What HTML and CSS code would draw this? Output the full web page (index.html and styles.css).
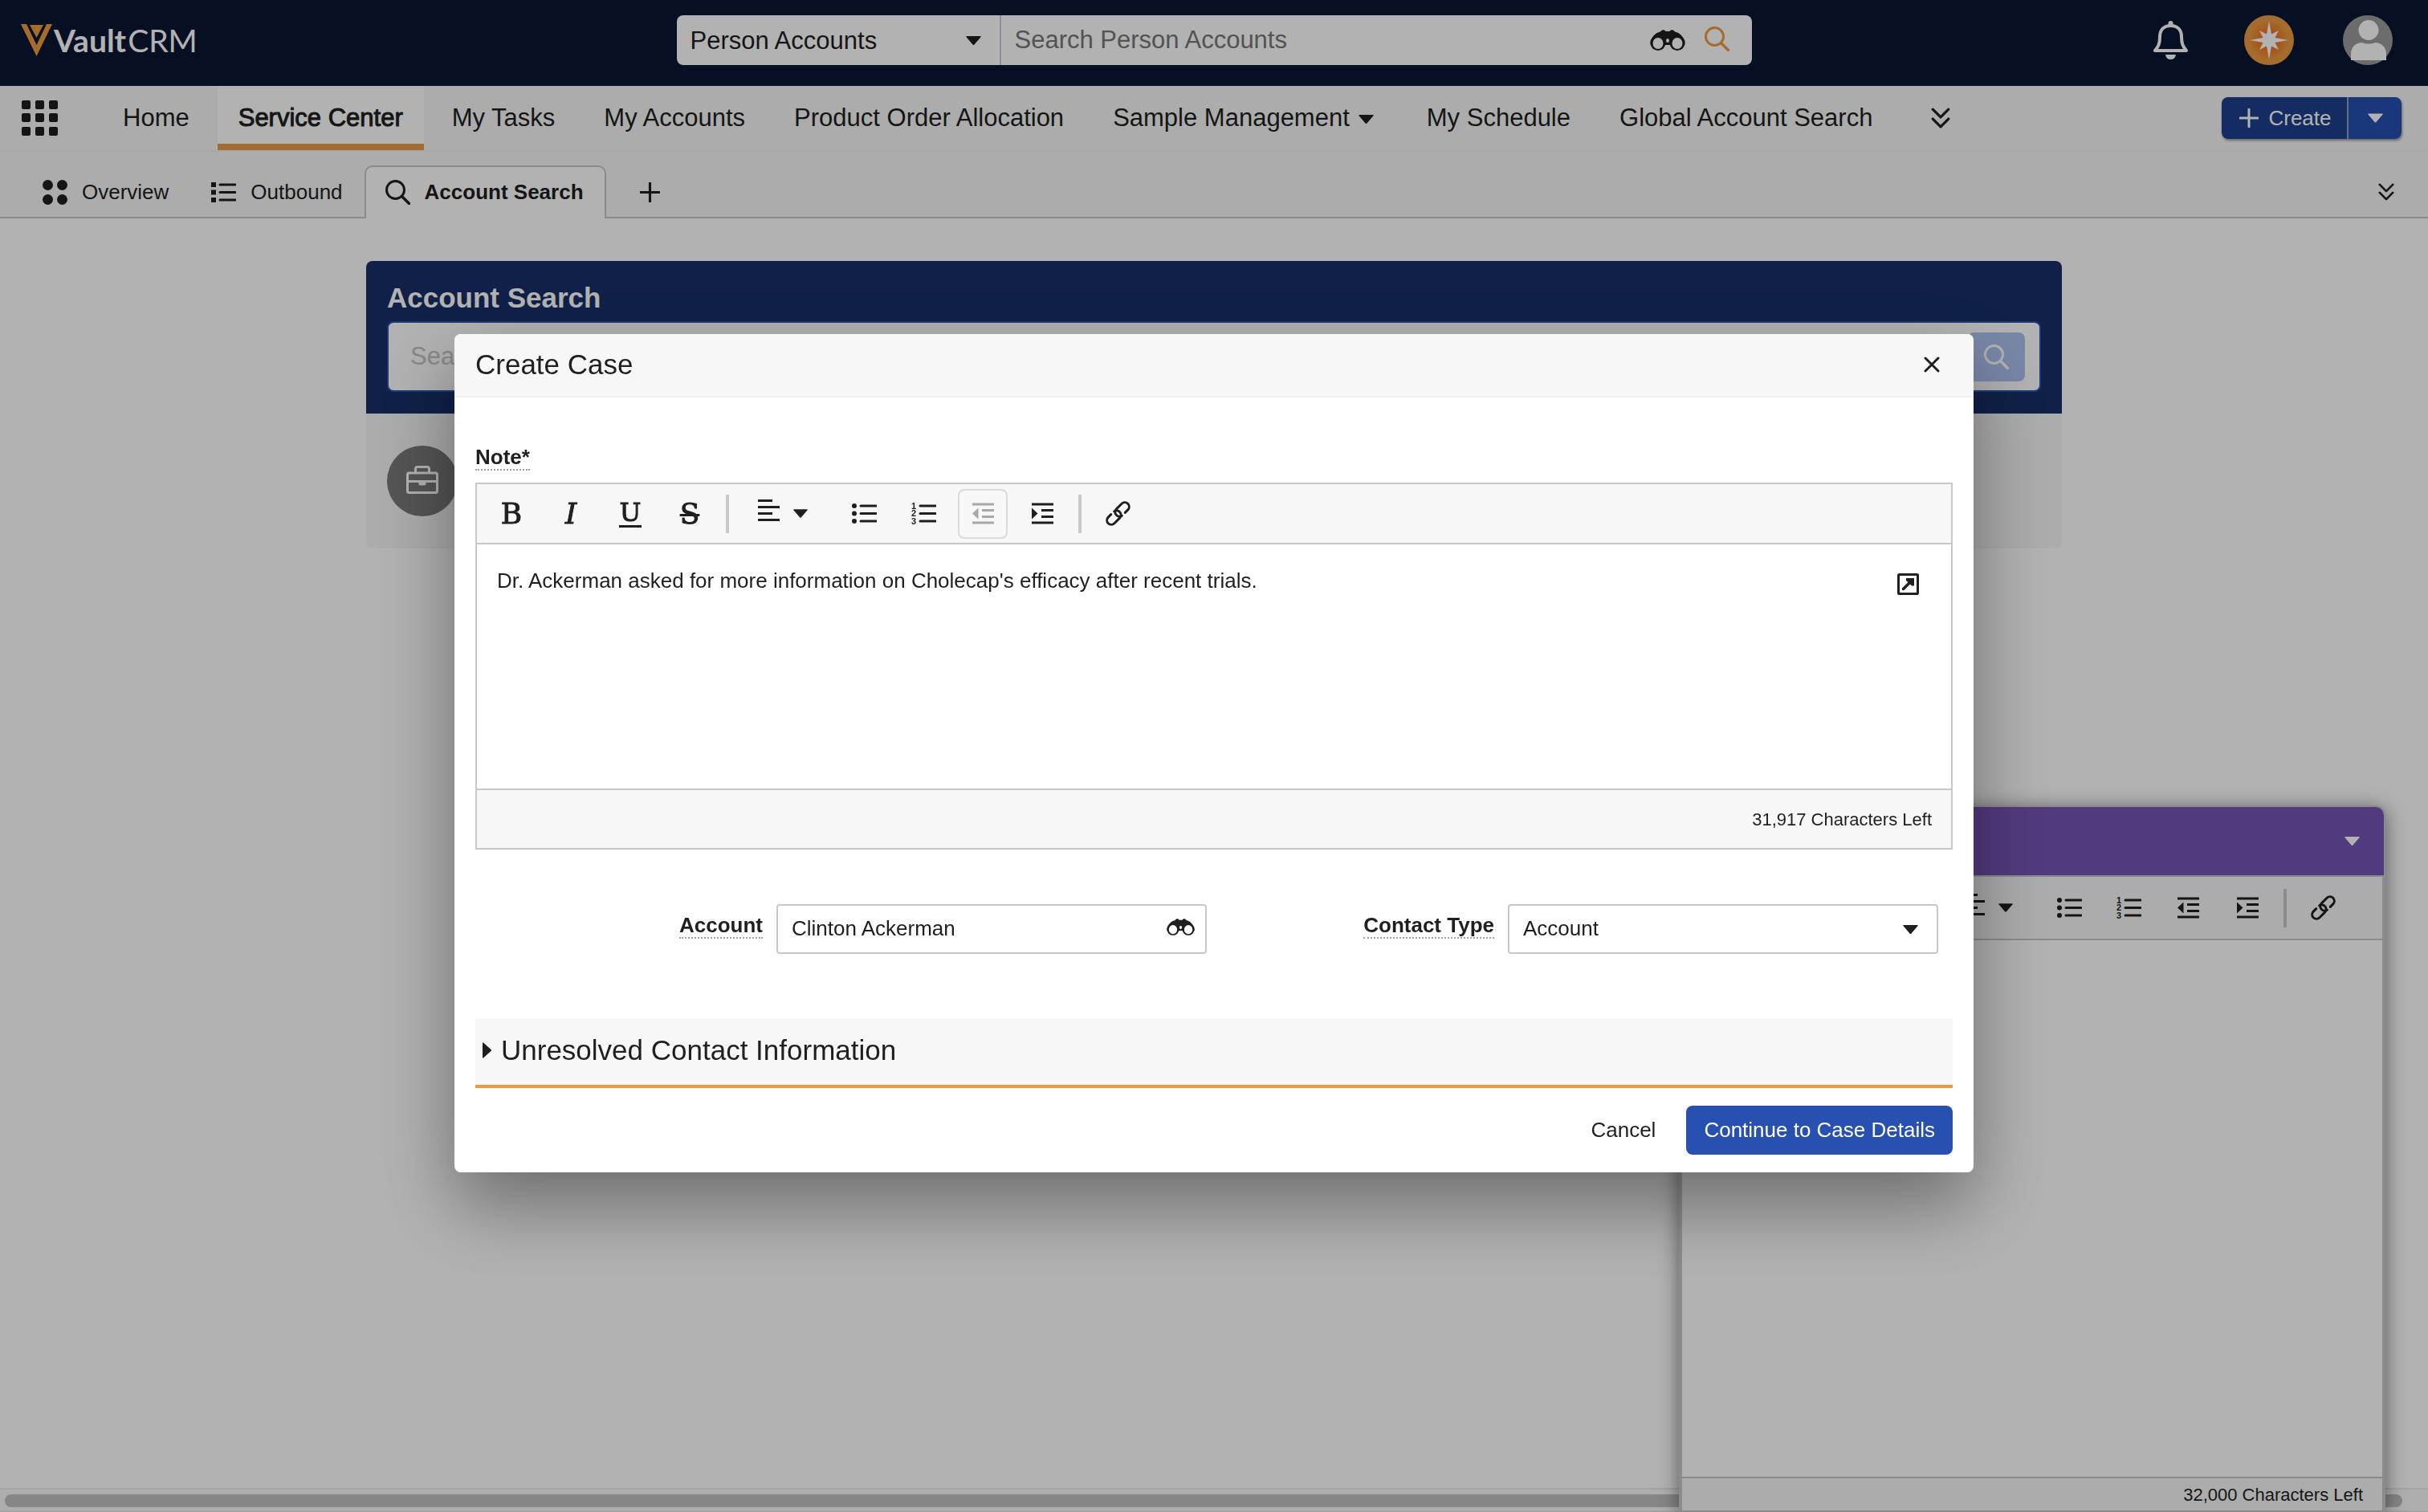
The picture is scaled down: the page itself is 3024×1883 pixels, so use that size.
FILE: index.html
```html
<!DOCTYPE html>
<html lang="en">
<head>
  <meta charset="UTF-8">
  <meta name="viewport" content="width=device-width, initial-scale=1.0">
  <title>Vault CRM - Service Center</title>
  <link rel="stylesheet" href="styles.css">
</head>
<body>

  <!-- icon sprite -->
  <svg class="sprite" aria-hidden="true">
    <symbol id="caret" viewBox="0 0 19 11"><path d="M1 0h17q1 0 .6 1L10.500 10.500q-1 1-2 0L.4 1Q0 0 1 0z" fill="currentColor"/></symbol>
    <symbol id="search" viewBox="0 0 31 31"><circle cx="12.500" cy="12.500" r="11" fill="none" stroke="currentColor" stroke-width="3"/><path d="M20.500 20.500l9 9" stroke="currentColor" stroke-width="3.500" stroke-linecap="round"/></symbol>
    <symbol id="binoculars" viewBox="0 0 44 26">
      <path d="M.6 14C3 8 8 3 13 2.500 15-.5 18-.5 19.500 2h5C26-.5 29-.5 31 2.500 36 3 41 8 43.400 14v5H.6z" fill="currentColor"/>
      <path d="M19 18h6v-7h-6z" fill="currentColor"/>
      <circle cx="10" cy="16.500" r="9.500" fill="currentColor"/><circle cx="34" cy="16.500" r="9.500" fill="currentColor"/>
      <ellipse cx="10" cy="17" rx="6.500" ry="7" fill="#fff"/><ellipse cx="34" cy="17" rx="6.500" ry="7" fill="#fff"/>
      <ellipse cx="22" cy="13.500" rx="2" ry="2.500" fill="#fff"/><path d="M20 26v-7h4v7z" fill="#fff"/>
    </symbol>
    <symbol id="chevrons" viewBox="0 0 22 24"><path d="M2 2l9 9 9-9M2 13l9 9 9-9" fill="none" stroke="currentColor" stroke-width="3" stroke-linecap="round" stroke-linejoin="round"/></symbol>
    <symbol id="plus" viewBox="0 0 24 24"><path d="M12 1v22M1 12h22" stroke="currentColor" stroke-width="3" stroke-linecap="round"/></symbol>
    <symbol id="align" viewBox="0 0 27 27"><path d="M0 1.500h18M0 9.500h27M0 17.500h18M0 25.500h27" stroke="currentColor" stroke-width="3"/></symbol>
    <symbol id="bullets" viewBox="0 0 31 27"><path d="M11 4h19M11 13.500h19M11 23h19" stroke="currentColor" stroke-width="3" stroke-linecap="round"/><circle cx="3" cy="4" r="3" fill="currentColor"/><circle cx="3" cy="13.500" r="3" fill="currentColor"/><circle cx="3" cy="23" r="3" fill="currentColor"/></symbol>
    <symbol id="numbers" viewBox="0 0 31 27"><path d="M11 4h19M11 13.500h19M11 23h19" stroke="currentColor" stroke-width="3" stroke-linecap="round"/><g class="list-digits" fill="currentColor"><text x="0" y="8">1</text><text x="0" y="17">2</text><text x="0" y="27">3</text></g></symbol>
    <symbol id="outdent" viewBox="0 0 27 27"><path d="M0 2h27M12 9.500h15M12 17.500h15M0 25h27" stroke="currentColor" stroke-width="3"/><path d="M7.500 6.500v14L0 13.500z" fill="currentColor"/></symbol>
    <symbol id="indent" viewBox="0 0 27 27"><path d="M0 2h27M12 9.500h15M12 17.500h15M0 25h27" stroke="currentColor" stroke-width="3"/><path d="M0 6.500v14l7.500-7z" fill="currentColor"/></symbol>
    <symbol id="link" viewBox="0 0 31 31"><path d="M22.500 20.900H27.400a5.400 5.400 0 0 0 0-10.800H18a5.400 5.400 0 0 0-1 10.700M8.500 10.100H3.600a5.400 5.400 0 0 0 0 10.800H13a5.400 5.400 0 0 0 1-10.700" transform="rotate(-45 15.500 15.500)" fill="none" stroke="currentColor" stroke-width="3" stroke-linecap="round"/></symbol>
  </svg>

  <header class="topbar">
    <a class="logo" href="#" aria-label="Vault CRM">
      <svg width="39" height="40" viewBox="0 0 39 40" fill="#ec9b43"><path d="M0 0h7l12.500 26L32 0h7L19.500 40z"/><path d="M11 1h17l-8.500 16z"/></svg>
      <span class="logo-vault">Vault</span><span class="logo-crm">CRM</span>
    </a>
    <form class="global-search">
      <div class="select-wrap scope">
        <select aria-label="Search scope"><option>Person Accounts</option></select>
        <svg class="caret" width="19" height="11"><use href="#caret"/></svg>
      </div>
      <input type="text" placeholder="Search Person Accounts" aria-label="Search Person Accounts">
      <button type="button" aria-label="Advanced search"><svg width="44" height="26"><use href="#binoculars"/></svg></button>
      <button type="button" class="go" aria-label="Search"><svg width="31" height="31"><use href="#search"/></svg></button>
    </form>
    <div class="user-tools">
      <button aria-label="Notifications">
        <svg width="43" height="48" viewBox="0 0 43 48"><path d="M21.500 6C12 6 8 12 8 20c0 9-2 12-6 17h39c-4-5-6-8-6-17 0-8-4-14-13.500-14z" fill="none" stroke="#fff" stroke-width="4" stroke-linejoin="round"/><path d="M18.500 6V3q0-3 3-3t3 3v3z" fill="#fff"/><path d="M15 42h13q-1 6-6.500 6T15 42z" fill="#fff"/></svg>
      </button>
      <button aria-label="Assistant">
        <svg width="62" height="62" viewBox="0 0 62 62"><defs><radialGradient id="glow"><stop offset=".2" stop-color="#f06a1c"/><stop offset=".8" stop-color="#ec9b43"/></radialGradient></defs><circle cx="31" cy="31" r="31" fill="url(#glow)"/><path d="M31 7l3 16.500L43 19l-4.500 9L55 31l-16.500 3L43 43l-9-4.500L31 55l-3-16.500L19 43l4.500-9L7 31l16.500-3L19 19l9 4.500z" fill="#fff"/></svg>
      </button>
      <button aria-label="Profile">
        <svg width="62" height="62" viewBox="0 0 62 62"><circle cx="31" cy="31" r="31" fill="#9b9b9b"/><circle cx="32" cy="18.500" r="12.500" fill="#fff"/><path d="M10 56V48c0-8 6-14 14-14 5 2 11 2 16 0 8 0 14 6 14 14v8z" fill="#fff"/></svg>
      </button>
    </div>
  </header>

  <nav class="main-nav">
    <button class="apps" aria-label="All apps">
      <svg width="45" height="44" viewBox="0 0 45 44" fill="currentColor"><rect width="11" height="11" rx="2"/><rect x="17" width="11" height="11" rx="2"/><rect x="34" width="11" height="11" rx="2"/><rect y="16" width="11" height="11" rx="2"/><rect x="17" y="16" width="11" height="11" rx="2"/><rect x="34" y="16" width="11" height="11" rx="2"/><rect y="33" width="11" height="11" rx="2"/><rect x="17" y="33" width="11" height="11" rx="2"/><rect x="34" y="33" width="11" height="11" rx="2"/></svg>
    </button>
    <a href="#">Home</a>
    <a href="#" class="active">Service Center</a>
    <a href="#">My Tasks</a>
    <a href="#">My Accounts</a>
    <a href="#">Product Order Allocation</a>
    <a href="#">Sample Management <svg class="nav-caret" width="19" height="11"><use href="#caret"/></svg></a>
    <a href="#">My Schedule</a>
    <a href="#">Global Account Search</a>
    <button class="more" aria-label="More tabs"><svg width="24" height="26"><use href="#chevrons"/></svg></button>
    <div class="create-group">
      <button class="create"><svg width="24" height="24"><use href="#plus"/></svg>Create</button>
      <button class="create-menu" aria-label="Create menu"><svg width="19" height="12"><use href="#caret"/></svg></button>
    </div>
  </nav>

  <div class="tabs">
    <a href="#" class="tab"><svg width="31" height="31" viewBox="0 0 31 31" fill="currentColor"><circle cx="6.500" cy="6.500" r="6.500"/><circle cx="24.500" cy="6.500" r="6.500"/><circle cx="6.500" cy="24.500" r="6.500"/><circle cx="24.500" cy="24.500" r="6.500"/></svg>Overview</a>
    <a href="#" class="tab"><svg width="31" height="27" viewBox="0 0 31 27"><path d="M11 4h19M11 13.500h19M11 23h19" stroke="currentColor" stroke-width="3" stroke-linecap="round"/><path d="M0 1h6v6H0zM0 10.500h6v6H0zM0 20h6v6H0z" fill="currentColor"/></svg>Outbound</a>
    <a href="#" class="tab active"><svg width="31" height="31"><use href="#search"/></svg>Account Search</a>
    <button class="add-tab" aria-label="New tab"><svg width="25" height="25"><use href="#plus"/></svg></button>
    <button class="tab-list" aria-label="Tab list"><svg width="20" height="22"><use href="#chevrons"/></svg></button>
  </div>

  <main class="page">
    <section class="search-card">
      <div class="search-head">
        <h2>Account Search</h2>
        <div class="search-box">
          <input type="text" placeholder="Search" aria-label="Search accounts">
          <button aria-label="Search"><svg width="31" height="31"><use href="#search"/></svg></button>
        </div>
      </div>
      <div class="search-results">
        <span class="case-icon">
          <svg width="40" height="35" viewBox="0 0 40 35" fill="none" stroke="#fff" stroke-width="3"><rect x="1.500" y="9" width="37" height="24.500" rx="2"/><path d="M11.500 9V4q0-2.500 2.500-2.500h12q2.500 0 2.500 2.500v5M2 19.500h36"/><path d="M15.500 20h9v2.500q0 2-2 2h-5q-2 0-2-2z" fill="#fff" stroke="none"/></svg>
        </span>
      </div>
    </section>
  </main>

  <div class="scrollbar"><div class="thumb"></div></div>

  <!-- docked note window, bottom right -->
  <aside class="note-window">
    <div class="note-title"><button aria-label="Minimize"><svg width="19" height="11"><use href="#caret"/></svg></button></div>
    <div class="toolbar">
      <button class="letter" aria-label="Bold">B</button>
      <button class="letter italic" aria-label="Italic">I</button>
      <button class="letter" aria-label="Underline"><span class="under">U</span></button>
      <button class="letter" aria-label="Strikethrough"><span class="strike">S</span></button>
      <span class="divider"></span>
      <button class="align" aria-label="Align"><svg width="27" height="27"><use href="#align"/></svg><svg width="18" height="11"><use href="#caret"/></svg></button>
      <button aria-label="Bulleted list"><svg width="31" height="27"><use href="#bullets"/></svg></button>
      <button aria-label="Numbered list"><svg width="31" height="27"><use href="#numbers"/></svg></button>
      <button aria-label="Decrease indent"><svg width="27" height="27"><use href="#outdent"/></svg></button>
      <button aria-label="Increase indent"><svg width="27" height="27"><use href="#indent"/></svg></button>
      <span class="divider"></span>
      <button aria-label="Link"><svg width="31" height="31"><use href="#link"/></svg></button>
    </div>
    <textarea class="note-body" aria-label="Note text"></textarea>
    <div class="note-footer">32,000 Characters Left</div>
  </aside>

  <div class="overlay">
    <div class="modal" role="dialog" aria-labelledby="modal-title">
      <div class="modal-header">
        <h1 id="modal-title">Create Case</h1>
        <button aria-label="Close"><svg width="20" height="20" viewBox="0 0 20 20"><path d="M2 2l16 16M18 2L2 18" stroke="currentColor" stroke-width="3" stroke-linecap="round"/></svg></button>
      </div>

      <div class="modal-body">
        <label class="field-label" for="note">Note*</label>
        <div class="editor">
          <div class="toolbar">
            <button class="letter" aria-label="Bold">B</button>
            <button class="letter italic" aria-label="Italic">I</button>
            <button class="letter" aria-label="Underline"><span class="under">U</span></button>
            <button class="letter" aria-label="Strikethrough"><span class="strike">S</span></button>
            <span class="divider"></span>
            <button class="align" aria-label="Align"><svg width="27" height="27"><use href="#align"/></svg><svg width="18" height="11"><use href="#caret"/></svg></button>
            <button aria-label="Bulleted list"><svg width="31" height="27"><use href="#bullets"/></svg></button>
            <button aria-label="Numbered list"><svg width="31" height="27"><use href="#numbers"/></svg></button>
            <button aria-label="Decrease indent" disabled><svg width="27" height="27"><use href="#outdent"/></svg></button>
            <button aria-label="Increase indent"><svg width="27" height="27"><use href="#indent"/></svg></button>
            <span class="divider"></span>
            <button aria-label="Link"><svg width="31" height="31"><use href="#link"/></svg></button>
          </div>
          <div class="editor-body">
            <textarea id="note">Dr. Ackerman asked for more information on Cholecap's efficacy after recent trials.</textarea>
            <button class="expand" aria-label="Expand editor"><svg width="27" height="27" viewBox="0 0 27 27"><rect x="1.500" y="1.500" width="24" height="24" rx="1" fill="none" stroke="currentColor" stroke-width="3"/><path d="M7.500 19.500L17 10" stroke="currentColor" stroke-width="3.500" stroke-linecap="round"/><path d="M11 6h10v9.500h-3L11 9z" fill="currentColor"/></svg></button>
          </div>
          <div class="editor-footer">31,917 Characters Left</div>
        </div>

        <div class="fields">
          <div class="field">
            <label class="field-label" for="account">Account</label>
            <div class="select-wrap">
              <input type="text" id="account" value="Clinton Ackerman">
              <button class="lookup" aria-label="Look up account"><svg width="35" height="21"><use href="#binoculars"/></svg></button>
            </div>
          </div>
          <div class="field">
            <label class="field-label" for="contact-type">Contact Type</label>
            <div class="select-wrap">
              <select id="contact-type"><option>Account</option></select>
              <svg class="caret" width="19" height="11"><use href="#caret"/></svg>
            </div>
          </div>
        </div>

        <button class="section-toggle" aria-expanded="false">
          <svg width="11" height="20" viewBox="0 0 11 20"><path d="M0 1q0-1 1-.5l9.500 8.500q1 1 0 2L1 19.500q-1 .5-1-.5z" fill="currentColor"/></svg>
          Unresolved Contact Information
        </button>
      </div>

      <div class="modal-footer">
        <button class="cancel">Cancel</button>
        <button class="primary">Continue to Case Details</button>
      </div>
    </div>
  </div>

</body>
</html>
```
FILE: styles.css
```css
* {
  box-sizing: border-box;
}

body {
  margin: 0;
  height: 100vh;
  display: flex;
  flex-direction: column;
  overflow: hidden;
  font-family: "Liberation Sans", Arial, sans-serif;
  font-size: 26px;
  color: #1f1f1f;
  background: #fff;
}

button, input, select, textarea {
  font: inherit;
  color: inherit;
  border: none;
  background: none;
  padding: 0;
  margin: 0;
  outline: none;
}

button {
  display: flex;
  align-items: center;
  justify-content: center;
  cursor: pointer;
}

select {
  appearance: none;
}

a {
  color: inherit;
  text-decoration: none;
}

h1, h2 {
  margin: 0;
}

svg {
  display: block;
  flex-shrink: 0;
}

.sprite {
  display: none;
}

.list-digits {
  font: bold 11px "Liberation Sans", Arial, sans-serif;
}

/* top bar */
.topbar {
  display: grid;
  grid-template-columns: 1fr 1339px 1fr;
  align-items: center;
  height: 107px;
  padding: 0 26px 7px;
  background: #0b1833;
}

.logo {
  display: flex;
  align-items: center;
  color: #fff;
  font-family: Lato, sans-serif;
  font-size: 39px;
}

.logo-vault {
  font-weight: bold;
  margin-left: 2px;
}

.logo-crm {
  margin-left: 2px;
}

.global-search {
  display: flex;
  align-items: center;
  height: 62px;
  padding-right: 28px;
  border-radius: 8px;
  background: #fff;
  font-size: 31px;
}

.global-search input {
  flex: 1;
  padding-left: 17px;
}

.global-search input::placeholder {
  color: #777;
}

.global-search .go {
  margin-left: 24px;
  padding-bottom: 3px;
  color: #ec9b43;
}

.select-wrap {
  position: relative;
}

.select-wrap .caret {
  position: absolute;
  right: 25px;
  top: 50%;
  margin-top: -5px;
  pointer-events: none;
}

.scope select {
  width: 404px;
  height: 62px;
  padding: 0 60px 0 17px;
  border-right: 2px solid #cdcce0;
}

.user-tools {
  display: flex;
  justify-content: flex-end;
  gap: 61px;
  margin-right: 18px;
}

.user-tools button:first-child {
  margin-right: 9px;
}

/* main nav */
.main-nav {
  display: flex;
  align-items: center;
  gap: 9px;
  height: 82px;
  padding: 0 33px 0 27px;
  background: #f7f7f7;
  border-bottom: 2px solid #eee;
  font-size: 31px;
}

.apps {
  margin-right: 46px;
}

.main-nav a {
  display: flex;
  align-items: center;
  height: 80px;
  padding: 0 26px;
  border-top: 8px solid transparent;
  border-bottom: 8px solid transparent;
  white-space: nowrap;
}

.main-nav a.active {
  background: #fff;
  border-top-color: #fff;
  border-bottom-color: #e99b42;
  -webkit-text-stroke: 1px #1f1f1f;
}

.nav-caret {
  margin: 3px 5px 0 11px;
}

.more {
  margin-left: 38px;
}

.create-group {
  display: flex;
  height: 52px;
  margin-left: auto;
  border-radius: 8px;
  overflow: hidden;
  box-shadow: 1px 2px 3px rgba(0, 0, 0, 0.4);
  color: #fff;
  font-size: 26px;
}

.create {
  gap: 12px;
  width: 156px;
  padding-left: 3px;
  background: #1e408b;
}

.create-menu {
  width: 68px;
  border-left: 2px solid #8f9fcc;
  background: #2750b0;
}

/* workspace tabs */
.tabs {
  display: flex;
  align-items: flex-end;
  height: 83px;
  padding: 0 42px 0 27px;
  background: #f7f7f7;
  box-shadow: inset 0 -2px #c8c8c8;
}

.tab {
  display: flex;
  align-items: center;
  gap: 18px;
  height: 66px;
  padding: 0 27px 0 26px;
}

.tab.active {
  padding: 0 26px 2px 24px;
  border: 2px solid #c8c8c8;
  border-bottom: none;
  border-radius: 10px 10px 0 0;
  background: #fff;
  font-weight: bold;
}

.add-tab {
  height: 66px;
  margin-left: 42px;
}

.tab-list {
  height: 66px;
  margin-left: auto;
}

/* page behind the dialog */
.page {
  flex: 1;
  padding: 53px 456px 0;
}

.search-card {
  border-radius: 8px;
  overflow: hidden;
}

.search-head {
  height: 190px;
  padding: 26px 26px 0;
  background: #172f68;
}

.search-head h2 {
  margin-bottom: 9px;
  color: #fff;
  font-size: 35px;
  line-height: 40px;
}

.search-box {
  display: flex;
  align-items: center;
  height: 88px;
  padding: 0 18px 0 27px;
  border: 2px solid #2854ae;
  border-radius: 8px;
  background: #fff;
  font-size: 31px;
}

.search-box input {
  flex: 1;
}

.search-box input::placeholder {
  color: #c4c4c4;
}

.search-box button {
  width: 71px;
  height: 61px;
  border-radius: 8px;
  background: #aec2f0;
  color: #fff;
}

.search-results {
  height: 168px;
  padding: 40px 26px;
  background: #f7f7f7;
}

.case-icon {
  display: flex;
  align-items: center;
  justify-content: center;
  width: 88px;
  height: 88px;
  padding-bottom: 4px;
  border-radius: 50%;
  background: #7a7a7a;
}

.scrollbar {
  height: 30px;
  padding: 6px 32px 6px 6px;
  border-top: 2px solid #e8e8e8;
  border-bottom: 2px solid #e8e8e8;
  background: #fafafa;
}

.thumb {
  height: 16px;
  border-radius: 8px;
  background: #c0c0c0;
}

/* rich text toolbar */
.toolbar {
  display: flex;
  align-items: center;
  height: 75px;
  padding-left: 12px;
  border-bottom: 2px solid #c8c8c8;
  background: #f7f7f7;
}

.toolbar button {
  width: 62px;
  height: 62px;
  margin-right: 12px;
  border-radius: 8px;
}

.toolbar button:disabled {
  border: 2px solid #dadada;
  color: #a8a8a8;
}

.toolbar .letter {
  font-family: "DejaVu Serif", serif;
  font-size: 36px;
  line-height: 36px;
  -webkit-text-stroke: 1px #1f1f1f;
}

.toolbar .italic {
  font-style: italic;
}

.under {
  padding: 0 1px;
  height: 34px;
  font-size: 32px;
  line-height: 31px;
  border-bottom: 3px solid #1f1f1f;
}

.strike {
  text-decoration: line-through 3px;
}

.divider {
  width: 4px;
  height: 48px;
  margin-left: 2px;
  background: #c8c8c8;
}

.toolbar .align {
  gap: 17px;
  width: 90px;
  margin: 0 25px 0 22px;
}

.align svg:first-child {
  margin-bottom: 8px;
}

.toolbar .divider + button:last-child {
  margin-left: 14px;
}

/* docked note window */
.note-window {
  position: fixed;
  right: 53px;
  bottom: 0;
  display: flex;
  flex-direction: column;
  width: 880px;
  height: 880px;
  border: 2px solid #c8c8c8;
  border-radius: 12px 12px 0 0;
  background: #fff;
  box-shadow: 0 4px 24px rgba(0, 0, 0, 0.5);
}

.note-title {
  display: flex;
  align-items: center;
  justify-content: flex-end;
  height: 85px;
  padding-right: 30px;
  border-radius: 10px 10px 0 0;
  background: #7555b7;
  color: #fff;
}

.note-window .toolbar {
  height: 81px;
  border: 2px solid #c8c8c8;
}

.note-body {
  flex: 1;
  resize: none;
  border: 2px solid #c8c8c8;
  border-width: 0 2px;
}

.note-footer {
  height: 42px;
  padding-right: 24px;
  border: 2px solid #c8c8c8;
  border-bottom: none;
  background: #f7f7f7;
  font-size: 22px;
  line-height: 42px;
  text-align: right;
}

/* create case dialog */
.overlay {
  position: fixed;
  inset: 0;
  display: flex;
  align-items: center;
  justify-content: center;
  padding-bottom: 7px;
  background: rgba(0, 0, 0, 0.3);
}

.modal {
  width: 100%;
  max-width: 1892px;
  border-radius: 8px;
  background: #fff;
  box-shadow: 0 40px 96px rgba(0, 0, 0, 0.4);
}

.modal-header {
  display: flex;
  align-items: center;
  justify-content: space-between;
  height: 79px;
  padding: 0 42px 1px 26px;
  border-bottom: 2px solid #eee;
  border-radius: 8px 8px 0 0;
  background: #f7f7f7;
}

.modal-header h1 {
  font-size: 35px;
  font-weight: normal;
}

.modal-body {
  padding: 59px 26px 0;
}

.field-label {
  display: inline-block;
  border-bottom: 2px dotted #a0a0a0;
  font-weight: bold;
  line-height: 30px;
  vertical-align: top;
}

.editor {
  margin-top: 15px;
  border: 2px solid #c8c8c8;
}

.editor-body {
  position: relative;
  height: 304px;
}

.editor-body textarea {
  display: block;
  width: 100%;
  height: 100%;
  padding: 27px 80px 27px 25px;
  line-height: 36px;
  resize: none;
}

.expand {
  position: absolute;
  top: 36px;
  right: 40px;
}

.editor-footer {
  height: 74px;
  padding-right: 24px;
  border-top: 2px solid #c8c8c8;
  background: #f7f7f7;
  font-size: 22px;
  line-height: 74px;
  text-align: right;
}

.fields {
  display: grid;
  grid-template-columns: 1fr 1fr;
  padding: 68px 18px 81px 0;
}

.field {
  display: flex;
  align-items: flex-start;
  justify-content: flex-end;
  gap: 17px;
}

.field .field-label {
  margin-top: 11px;
}

.field input,
.field select {
  display: block;
  width: 536px;
  height: 62px;
  padding: 0 70px 2px 17px;
  border: 2px solid #c8c8c8;
  border-radius: 4px;
}

.lookup {
  position: absolute;
  top: 18px;
  right: 15px;
}

.section-toggle {
  justify-content: flex-start;
  gap: 12px;
  width: 100%;
  height: 86px;
  padding: 0 0 4px 9px;
  border-bottom: 4px solid #ec9b43;
  background: #f7f7f7;
  font-size: 35px;
}

.modal-footer {
  display: flex;
  justify-content: flex-end;
  gap: 16px;
  padding: 22px 26px;
}

.cancel,
.primary {
  height: 61px;
  padding: 0 22px;
  border-radius: 8px;
}

.primary {
  background: #2850b0;
  color: #fff;
}
```
